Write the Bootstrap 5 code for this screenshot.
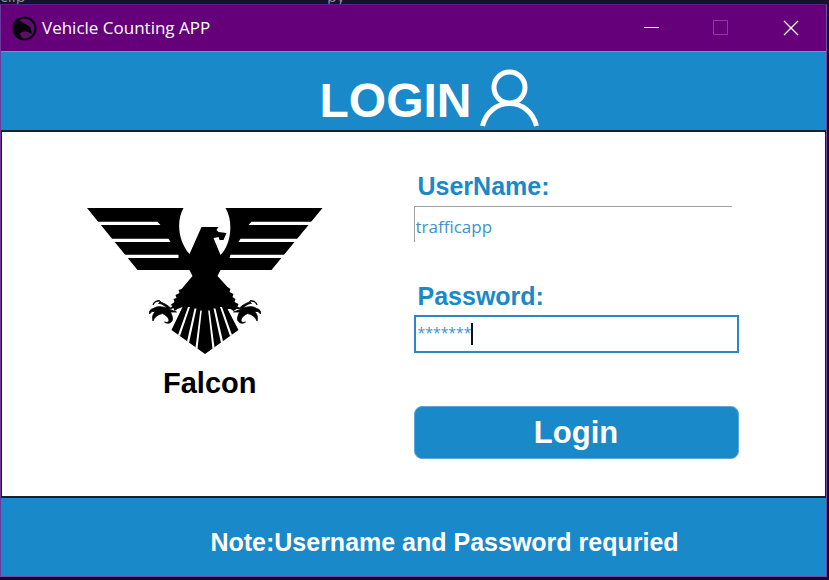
<!DOCTYPE html>
<html lang="en">
<head>
<meta charset="utf-8">
<meta name="viewport" content="width=device-width, initial-scale=1">
<title>Vehicle Counting APP</title>
<link href="https://cdn.jsdelivr.net/npm/bootstrap@5.3.0/dist/css/bootstrap.min.css" rel="stylesheet">
<style>
  :root { --app-blue: #1989c9; }
  body { background: #170630; font-family: "Liberation Sans", Arial, sans-serif; }
  .backdrop { height: 4px; background: #15132b; color: #8d8a99; font: 16px/16px "Open Sans", sans-serif; }
  .backdrop span { flex: 0 0 327px; }
  .app-window { margin: 0 2px 3px 0; border: 1px solid #7a48a5; border-top-color: #5b2085; border-left-color: #6a3a9c; }
  .titlebar { height: 46px; padding-left: 11px; background: #66007a; color: #fff; font-family: "Open Sans", "Noto Sans", sans-serif; }
  .titlebar h1 { font-size: 17px; line-height: 24px; padding-left: 1px; }
  .win-btn { width: 70px; height: 46px; padding: 0; border: 0; background: transparent; color: #fff; }
  .win-btn svg { display: block; margin: 0 auto; }
  .banner { height: 79px; padding-left: 32px; background: var(--app-blue); color: #fff; border-top: 1px solid #5a9bd8; }
  .banner h2 { font-size: 48px; line-height: 48px; padding-top: 20px; }
  .banner svg { margin-top: 15px; }
  .content { background: #fff; border: 1px solid #15222c; border-top-width: 2px; border-bottom-width: 2px; }
  .brand { padding: 74px 6px 0 0; }
  .brand-name { color: #000; font-size: 29px; line-height: 36px; margin: 9px 0 0 10px; }
  .login-form { width: 79%; padding: 40px 0 37px; }
  .login-form label { color: var(--app-blue); font-size: 25px; line-height: 28px; padding-left: 4px; }
  .entry { display: block; width: 100%; border-radius: 0; outline: 0; color: #3c93cc; font-family: "Open Sans", "Noto Sans", sans-serif; background: #fff; }
  .entry-user { width: 98%; height: 36px; margin: 6px 0 40px; padding: 3px 2px 0 1px; border: 0 solid #a0a0a0; border-width: 1px 0 0 1px; font-size: 17px; }
  .entry-pass { height: 38px; padding: 0 2px 4px; border: 2px solid #2f86c4; font-size: 14px; }
  .pass-box { margin: 5px 0 53px; }
  .caret { left: 57px; top: 8px; width: 2px; height: 22px; background: #111; }
  .login-btn { height: 53px; padding: 0; border: 1px solid #5fa9d8; border-radius: 8px; background: var(--app-blue); color: #fff; font-size: 31px; line-height: 48px; }
  .login-btn:hover { background: #1479b4; color: #fff; }
  .notice { height: 78px; padding: 10px 0 0 62px; background: var(--app-blue); color: #fff; font-size: 25px; line-height: 28px; }
</style>
</head>
<body class="min-vh-100 d-flex flex-column">
<div class="backdrop d-flex align-items-end overflow-hidden" aria-hidden="true"><span>clip</span><div>py</div></div>
<div class="app-window flex-grow-1 d-flex flex-column">
  <header class="titlebar d-flex align-items-center">
    <svg width="25" height="25" viewBox="0 0 25 25" aria-hidden="true">
      <circle cx="12.500" cy="12.500" r="11" fill="#5a106a" stroke="#08020c" stroke-width="2"/>
      <path d="M1 8C3 4 7 3 10 6L15 9C18 10 19 12 19 14L20 18L16 16C13 15 10 16 8 17C8 20 10 22 13 24C7 24 1 19 1 12Z" fill="#08020c"/>
    </svg>
    <h1 class="fw-normal mb-0 ms-1 me-auto">Vehicle Counting APP</h1>
    <button class="win-btn" type="button" aria-label="Minimize"><svg width="16" height="16" viewBox="0 0 16 16"><path d="M1 7.500H16" stroke="#fff"/></svg></button>
    <button class="win-btn" type="button" aria-label="Maximize" disabled><svg width="16" height="16" viewBox="0 0 16 16"><path d="M.5 .5H14.500V14.500H.5Z" fill="none" stroke="#96369f"/></svg></button>
    <button class="win-btn" type="button" aria-label="Close"><svg width="16" height="16" viewBox="0 0 16 16"><path d="M1 1L15 15M15 1L1 15" stroke="#fff" stroke-width="1.300"/></svg></button>
  </header>
  <div class="banner d-flex justify-content-center align-items-center gap-2">
    <h2 class="fw-bold mb-0">LOGIN</h2>
    <svg width="60" height="60" viewBox="0 0 60 60" fill="none" stroke="#fff" stroke-width="5" aria-hidden="true">
      <circle cx="29.500" cy="18.500" r="15.500"/>
      <path d="M2.500 57C6 43 17 34.500 29.500 34.500S53 43 56.500 57"/>
    </svg>
  </div>
  <main class="content row g-0 flex-grow-1">
    <section class="brand col-6 d-flex flex-column align-items-center">
      <svg width="238" height="150" viewBox="86.500 206 238 150" role="img" aria-label="Falcon logo">
        <path d="M87.500 208H184C177 220 178 240 190 254L202 227H219L217 230L219 232L227 233L224 240L220 240L219 237L214 238L221 255C232 244 234 221 226 208H323L272 270H221L218 276L228 287L231 289L230 292L234 294L233 297L236 299L235 302L239 304L238 307L241 309L237 309L234 311L231 309H228L239 330L205.500 354L172 330L183 307L178 309L175 311L174 308L170 309L173 306L171 305L175 302L174 299L177 298L176 295L180 293L179 290L182 289L193 276L190 270H138Z"/>
        <g fill="#fff">
          <path d="M97 221.700H158L161 225H100ZM111 238.700H169L171 242H114ZM124 254.700H179V258H127ZM314 221.700H252L249 225H311ZM300 238.700H241L239 242H297ZM287 254.700H231L230 258H284Z"/>
          <path d="M188.500 307L190.500 307L180.500 336L178.500 335ZM195 308.500H197L189.500 343L187.500 341.500ZM200.800 310.500H202.300L198 349L196 347.500ZM208.700 310.500H210.200L215 347.500L213 349ZM214 308.500H216L223.500 341.500L221.500 343ZM220.500 307H222.500L232.500 335L230.500 336Z"/>
        </g>
        <path id="talon" stroke="#000" stroke-width=".8" d="M177 307L168 309C165 305 162 303.500 159 303.500L161 301.500C158 300.500 155 302 153.500 305C154 302 156 300.500 160 300.500L161 302C164 303 168 305 171 308L175 307ZM169 309C163 306 157 306 154 308.500C151 309 149.500 311 150 314L152.500 311.500L156 311.500C153 314 152.500 318 153.500 321C155 317 158 314.500 163 313.500C166 315 169 317 169.500 320C169.500 322 168 323 165 322C168 324.500 173 323 173 319C173 315 171 313 171 312L177 312Z"/>
        <use href="#talon" transform="matrix(-1 0 0 1 411 0)"/>
      </svg>
      <div class="brand-name fw-bold">Falcon</div>
    </section>
    <section class="col-6">
      <form class="login-form" onsubmit="return false">
        <label class="fw-bold d-block" for="username">UserName:</label>
        <input class="entry entry-user" id="username" type="text" value="trafficapp" autocomplete="off">
        <label class="fw-bold d-block" for="password">Password:</label>
        <div class="pass-box position-relative">
          <input class="entry entry-pass" id="password" type="text" value="*******" autocomplete="off">
          <span class="caret position-absolute" aria-hidden="true"></span>
        </div>
        <button class="login-btn btn w-100 fw-bold" type="submit">Login</button>
      </form>
    </section>
  </main>
  <footer class="notice d-flex justify-content-center align-items-center fw-bold">Note:Username and Password requried</footer>
</div>
<script src="https://cdn.jsdelivr.net/npm/bootstrap@5.3.0/dist/js/bootstrap.bundle.min.js"></script>
</body>
</html>
